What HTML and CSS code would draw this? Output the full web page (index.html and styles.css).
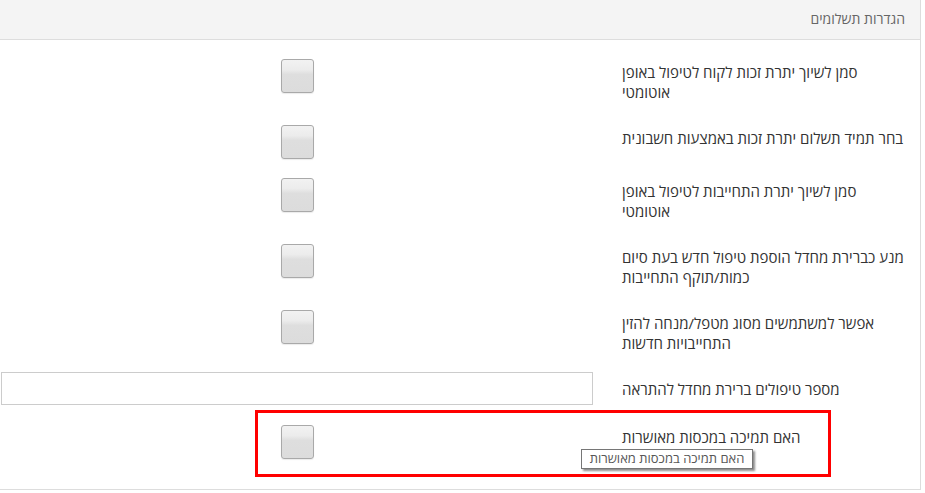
FILE: index.html
```html
<!DOCTYPE html>
<html lang="he" dir="rtl">
<head>
<meta charset="utf-8">
<title>הגדרות תשלומים</title>
<link rel="stylesheet" href="styles.css">
</head>
<body>
<div class="panel">
  <div class="panel-heading">הגדרות תשלומים</div>
  <div class="panel-body">
    <div class="row">
      <label class="row-label">סמן לשיוך יתרת זכות לקוח לטיפול באופן אוטומטי</label>
      <div class="row-field"><span class="check"></span></div>
    </div>
    <div class="row">
      <label class="row-label">בחר תמיד תשלום יתרת זכות באמצעות חשבונית</label>
      <div class="row-field"><span class="check"></span></div>
    </div>
    <div class="row">
      <label class="row-label">סמן לשיוך יתרת התחייבות לטיפול באופן אוטומטי</label>
      <div class="row-field"><span class="check"></span></div>
    </div>
    <div class="row">
      <label class="row-label">מנע כברירת מחדל הוספת טיפול חדש בעת סיום כמות/תוקף התחייבות</label>
      <div class="row-field"><span class="check"></span></div>
    </div>
    <div class="row">
      <label class="row-label">אפשר למשתמשים מסוג מטפל/מנחה להזין התחייבויות חדשות</label>
      <div class="row-field"><span class="check"></span></div>
    </div>
    <div class="row">
      <label class="row-label">מספר טיפולים ברירת מחדל להתראה</label>
      <div class="row-field"><input class="text-input" type="text"></div>
    </div>
    <div class="row row-last">
      <label class="row-label">האם תמיכה במכסות מאושרות</label>
      <div class="row-field"><span class="check check-last"></span></div>
      <div class="highlight"></div>
      <div class="tooltip">האם תמיכה במכסות מאושרות</div>
    </div>
  </div>
</div>
</body>
</html>
```

FILE: styles.css
```css
html, body {
  margin: 0;
  padding: 0;
  background: #ffffff;
}
body {
  font-family: "Open Sans", "DejaVu Sans", sans-serif;
  color: #333333;
  font-size: 15px;
}
.panel {
  width: 920px;
  margin-right: auto;
  margin-left: 0;
  border-right: 1px solid #dddddd;
  border-bottom: 1px solid #dddddd;
  background: #ffffff;
}
.panel-heading {
  height: 39px;
  line-height: 37px;
  border-bottom: 1px solid #dddddd;
  background: #f4f4f4;
  color: #666666;
  font-size: 14px;
  padding-right: 15px;
}
.panel-body {
  padding: 15px 0;
}
.row {
  display: flex;
  align-items: flex-start;
  margin-bottom: 15px;
}
.row-last {
  position: relative;
}
.row-label {
  width: 283px;
  padding: 7px 15px 4px 0;
  line-height: 20px;
  flex: none;
  text-align: left;
}
.row-field {
  flex: 1;
  padding: 0 29px 0 1px;
  display: flex;
  justify-content: center;
}
.check {
  display: block;
  width: 31px;
  height: 32px;
  margin-top: 4px;
  border: 1px solid #a9a9a9;
  border-radius: 3px;
  background: linear-gradient(#f2f2f2 0%, #ececec 30%, #dedede 45%, #dcdcdc 100%);
  box-shadow: 0 1px 1px rgba(0, 0, 0, 0.08);
}
.check-last {
  margin-top: 5px;
}
.text-input {
  display: block;
  width: 100%;
  height: 33px;
  box-sizing: border-box;
  border: 1px solid #cccccc;
  margin: 0;
  background: #ffffff;
}
.highlight {
  position: absolute;
  left: 255px;
  top: -10px;
  width: 570px;
  height: 61px;
  border: 3px solid #ff0000;
}
.tooltip {
  position: absolute;
  left: 581px;
  top: 29px;
  width: 170px;
  height: 18px;
  line-height: 17px;
  border: 1px solid #767676;
  background: #ffffff;
  color: #575757;
  font-size: 13px;
  text-align: center;
  box-shadow: 2px 2px 2px rgba(0, 0, 0, 0.45);
  white-space: nowrap;
}
```
